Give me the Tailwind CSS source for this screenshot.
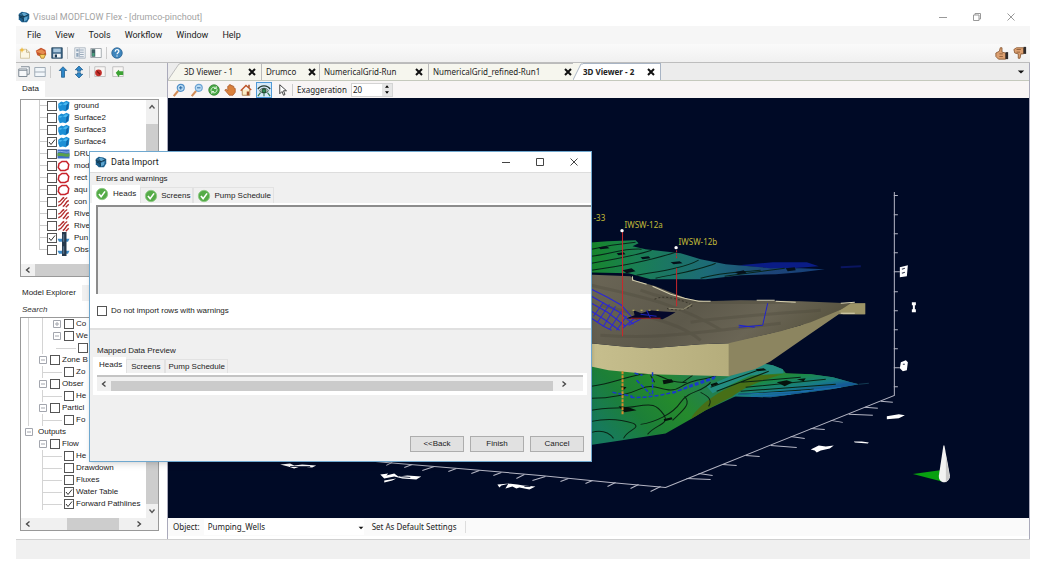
<!DOCTYPE html>
<html lang="en">
<head>
<meta charset="utf-8">
<title>Visual MODFLOW Flex - [drumco-pinchout]</title>
<script src="https://cdn.jsdelivr.net/npm/@tailwindcss/browser@4"></script>
</head>
<body class="bg-white font-['Liberation_Sans',Arial,sans-serif] text-[8px] leading-3 text-[#222]">

<!-- Icon library -->
<svg class="hidden">
  <symbol id="logo" viewBox="0 0 16 16"><path d="M1 4l4-3 6 1 4 2v6l-3 5-7 0-4-4z" fill="#1d5f8c"/><path d="M3 4l5-2 5 3-4 3zM8 9l5-2-1 5-4 2z" fill="#5fa6cf"/><path d="M2 8l5 2v4M1 6l6 2 7-3M4 3l4 5" stroke="#123448" stroke-width="1.2" fill="none"/></symbol>
  <symbol id="new" viewBox="0 0 16 16"><path d="M2 3h8l4 4v8H2z" fill="#fbf6e4" stroke="#c9b98c"/><path d="M10 3v4h4" fill="none" stroke="#b5a67c"/><path d="M4 0l1 3 3 1-3 1-1 3-1-3-3-1 3-1z" fill="#f0b93a"/></symbol>
  <symbol id="open" viewBox="0 0 16 16"><path d="M1 5l7-4 6 3 1 6-4 4-8-3z" fill="#c5532c"/><path d="M1 6l8-3 5 4-3 3z" fill="#e68c4f"/><path d="M6 10h8l-2 5H8z" fill="#f5cf62" stroke="#a8711c"/></symbol>
  <symbol id="save" viewBox="0 0 16 16"><path d="M1 1h14v14H1z" fill="#3c6485" stroke="#1e3d57"/><path d="M3 2h10v5H3z" fill="#a9c6dc"/><path d="M3 9h10v5H3z" fill="#f3f6f8"/><path d="M5 10h3v4H5z" fill="#1e3d57"/></symbol>
  <symbol id="table" viewBox="0 0 16 16"><path d="M1 1h14v14H1z" fill="#eef1f4" stroke="#a3adb8"/><path d="M3 3h3v3H3zM3 8h3v5H3z" fill="#8fa5ba"/><path d="M8 4h5M8 7h5M8 10h5M8 13h5M7 2v12" stroke="#7f93a8"/></symbol>
  <symbol id="panel" viewBox="0 0 16 16"><path d="M1 2h14v12H1z" fill="#fff" stroke="#8a9298"/><path d="M2 3h5v10H2z" fill="#3f5f63"/><path d="M3 8h3v4H3z" fill="#49a07d"/></symbol>
  <symbol id="help" viewBox="0 0 16 16"><circle cx="8" cy="8" r="7" fill="#3f86bd" stroke="#265e8d"/><path d="M5.500 6.200c0-3.400 5-3.300 5-.4 0 1.800-2.400 1.900-2.400 3.700M8 11.200v1.600" fill="none" stroke="#fff" stroke-width="1.700"/></symbol>
  <symbol id="windows" viewBox="0 0 16 16"><path d="M4 1h11v10h-3M1 4h11v10H1z" fill="#f6f8fa" stroke="#7d8993" stroke-width="1.300"/><path d="M1 6h11" stroke="#7d8993"/></symbol>
  <symbol id="split" viewBox="0 0 16 16"><path d="M1 2h14v12H1zM1 8h14" fill="#f1f6fa" stroke="#9fabb6" stroke-width="1.300"/></symbol>
  <symbol id="up" viewBox="0 0 16 16"><path d="M8 1l5 5h-3v9H6V6H3z" fill="#2c86c8" stroke="#1b5b8e"/></symbol>
  <symbol id="updown" viewBox="0 0 16 16"><path d="M8 0l5 5h-3v2H6V5H3zM8 16l5-5h-3V9H6v2H3z" fill="#2c86c8" stroke="#1b5b8e"/></symbol>
  <symbol id="rec" viewBox="0 0 16 16"><path d="M1 1h14v13H1z" fill="#f8f6f4" stroke="#b3b3b3"/><circle cx="6" cy="9" r="4.500" fill="#c22f2b"/><path d="M4 7l4 4" stroke="#7e1512" stroke-width="1.500"/></symbol>
  <symbol id="rec2" viewBox="0 0 16 16"><path d="M1 1h14v13H1z" fill="#f8f6f4" stroke="#b3b3b3"/><path d="M5 9l4-4 1 2h5v5h-5l-1 3z" fill="#3ca234"/></symbol>
  <symbol id="zoomin" viewBox="0 0 16 16"><path d="M7 9l-5 6" stroke="#d28c57" stroke-width="2.500"/><circle cx="10" cy="5.500" r="4" fill="#bcdcf4" stroke="#4f8ec6" stroke-width="1.300"/><path d="M8 5.500h4M10 3.500v4" stroke="#1d5b9a"/></symbol>
  <symbol id="zoomout" viewBox="0 0 16 16"><path d="M7 9l-5 6" stroke="#d28c57" stroke-width="2.500"/><circle cx="10" cy="5.500" r="4" fill="#bcdcf4" stroke="#6da3d2" stroke-width="1.300"/><path d="M8 5.500h4" stroke="#1d5b9a"/></symbol>
  <symbol id="rotate" viewBox="0 0 16 16"><circle cx="8" cy="8" r="7" fill="#4aa846" stroke="#2f7c2d"/><path d="M4 9c0-5 5-6 7-3M12 7c0 5-5 6-7 3M11 3v3H8M5 13v-3h3" fill="none" stroke="#dff4dd" stroke-width="1.300"/></symbol>
  <symbol id="hand" viewBox="0 0 16 16"><path d="M1 8l2-1 2 2V3l2-1V1h2v1l2 0v1h2v2l2 1v5l-3 4H7z" fill="#d9803c" stroke="#a9582a"/></symbol>
  <symbol id="home" viewBox="0 0 16 16"><path d="M3 8v7h10V7" fill="#fbeec6" stroke="#9a6a31"/><path d="M1 9l7-7 7 6" fill="none" stroke="#c0562a" stroke-width="2"/><path d="M9 10h3v5H9zM11 1h2v4h-2z" fill="#a34c25"/></symbol>
  <symbol id="eye" viewBox="0 0 16 16"><path d="M1 7c3-5 11-5 14 0" fill="none" stroke="#263c33" stroke-width="1.500"/><path d="M3 9c2-4 8-4 10 0-2 3-8 3-10 0z" fill="#e9f6ec" stroke="#263c33"/><circle cx="8" cy="9" r="2.400" fill="#2f8a55" stroke="#15301f"/><path d="M4 11l-3 4M12 11l3 4M8 12v3" stroke="#2f7a4c" stroke-width="1.300"/></symbol>
  <symbol id="cursor" viewBox="0 0 16 16"><path d="M5 1v12l3-3 2 5 2-1-2-5h4z" fill="#fff" stroke="#333" stroke-width="1.200"/></symbol>
  <symbol id="like" viewBox="0 0 16 16"><path d="M1 8l4-2 1-4h2v5l4 1v7H4l-3-3z" fill="#dca071" stroke="#8d5c36"/><path d="M12 7h3v8h-3z" fill="#2f2b2b"/><path d="M5 9h4M5 12h4" stroke="#8d5c36"/></symbol>
  <symbol id="dislike" viewBox="0 0 16 16"><path d="M1 4l3-2h8v7l-3 0-1 5H6V9L2 8z" fill="#dca071" stroke="#8d5c36"/><path d="M12 1h3v8h-3z" fill="#2f2b2b"/><path d="M4 4h5M4 7h4" stroke="#8d5c36"/></symbol>
  <symbol id="surface" viewBox="0 0 16 16"><path d="M1 5l4-3 3 1 4-2 4 2-1 9-4 3-4-1-4 1-2-5z" fill="#1b8fd6"/><path d="M2 5l5 1 4-3 4 1-4 3-4-1-4 2z" fill="#49b9f0"/><path d="M15 3l-1 9-3 2 1-7z" fill="#0f63a6"/></symbol>
  <symbol id="layers" viewBox="0 0 16 16"><path d="M0 2h16v12H0z" fill="#3f6fc4"/><path d="M0 7c5-2 10 2 16 0v4c-5 2-10-1-16 0z" fill="#5aa04b"/><path d="M0 5c5-2 10 2 16 0" stroke="#a9c8f0" fill="none"/></symbol>
  <symbol id="ring" viewBox="0 0 16 16"><path d="M6 2h6l3 4-1 6-4 2H4L1 10l1-5z" fill="#fff" stroke="#c8242c" stroke-width="2"/></symbol>
  <symbol id="lines" viewBox="0 0 16 16"><path d="M1 8c4 0 4-5 8-6M1 13c6-1 6-8 12-11M7 14c4-1 3-6 8-8M11 15l4-4" fill="none" stroke="#b32a2a" stroke-width="1.800"/></symbol>
  <symbol id="well" viewBox="0 0 16 16"><path d="M0 9h16l-2 4H2z" fill="#3c8ac6"/><path d="M6 0h6v16H6z" fill="#25384b"/><path d="M7 3h2v10H7z" fill="#56718a"/></symbol>
  <symbol id="ok" viewBox="0 0 16 16"><circle cx="8" cy="8" r="6.500" fill="#54ab47" stroke="#8fca86"/><path d="M4.500 8l2.500 3 4.500-6" fill="none" stroke="#fff" stroke-width="1.800"/></symbol>
  <symbol id="tick" viewBox="0 0 10 10"><path d="M2 5l2 2.500 4-5" fill="none" stroke="#333"/></symbol>
  <symbol id="x" viewBox="0 0 10 10"><path d="M1.500 1.500l7 7M8.500 1.500l-7 7" fill="none" stroke="currentColor"/></symbol>
  <symbol id="xb" viewBox="0 0 10 10"><path d="M2 2l6 6M8 2L2 8" fill="none" stroke="#111" stroke-width="2"/></symbol>
  <symbol id="left" viewBox="0 0 10 10"><path d="M6.500 2.500L3.500 5l3 2.500" fill="none" stroke="#444" stroke-width="1.300"/></symbol>
  <symbol id="right" viewBox="0 0 10 10"><path d="M3.500 2.500L6.500 5l-3 2.500" fill="none" stroke="#444" stroke-width="1.300"/></symbol>
  <symbol id="upc" viewBox="0 0 10 10"><path d="M2.500 6.500L5 3.500l2.500 3" fill="none" stroke="#555" stroke-width="1.300"/></symbol>
  <symbol id="downc" viewBox="0 0 10 10"><path d="M2.500 3.500L5 6.500l2.500-3" fill="none" stroke="#555" stroke-width="1.300"/></symbol>
  <symbol id="caret" viewBox="0 0 10 10"><path d="M1 3h8L5 7z" fill="#111"/></symbol>
  <symbol id="plus" viewBox="0 0 8 8"><path d="M.5.5h7v7h-7zM2 4h4M4 2v4" fill="#fff" stroke="#a3a6ae"/></symbol>
  <symbol id="minus" viewBox="0 0 8 8"><path d="M.5.5h7v7h-7zM2 4h4" fill="#fff" stroke="#a3a6ae"/></symbol>
</svg>

<div class="relative mt-2 mr-5 ml-4">
  <!-- Title bar -->
  <header class="flex h-[18px] items-center font-[Roboto,sans-serif] text-[9px] text-[#a3a3a3]">
    <svg class="ml-0.5 size-3"><use href="#logo"/></svg>
    <h1 class="ml-[3px]">Visual MODFLOW Flex - [drumco-pinchout]</h1>
    <div class="mr-3.5 ml-auto flex gap-6 text-[#999]">
      <button aria-label="Minimize"><svg class="size-2.5" viewBox="0 0 10 10"><path d="M1 5.500h8" stroke="currentColor"/></svg></button>
      <button aria-label="Restore"><svg class="size-2.5" viewBox="0 0 10 10"><path d="M1.500 3h5.500v5.500H1.500zM3 3V1.500h5.500V7H7" fill="none" stroke="currentColor"/></svg></button>
      <button aria-label="Close"><svg class="size-2.5"><use href="#x"/></svg></button>
    </div>
  </header>

  <!-- Menu bar -->
  <nav class="flex h-[18px] items-center gap-3.5 bg-[#f6f6f6] pl-[11px] font-[Roboto,sans-serif] text-[9px]">
    <button>File</button><button>View</button><button>Tools</button><button>Workflow</button><button>Window</button><button>Help</button>
  </nav>

  <!-- Main toolbar -->
  <div class="flex h-[19px] items-center gap-1 border-b border-[#bdbdbd] bg-linear-to-b from-[#fafafa] to-[#f0f0f0] pl-[3px]">
    <button aria-label="New"><svg class="size-3"><use href="#new"/></svg></button>
    <button aria-label="Open"><svg class="size-3"><use href="#open"/></svg></button>
    <button aria-label="Save"><svg class="size-3"><use href="#save"/></svg></button>
    <span class="h-3 w-px bg-[#ccc]"></span>
    <button aria-label="Table" class="ml-0.5"><svg class="size-3"><use href="#table"/></svg></button>
    <button aria-label="Panel"><svg class="size-3"><use href="#panel"/></svg></button>
    <span class="h-3 w-px bg-[#ccc]"></span>
    <button aria-label="Help"><svg class="size-3"><use href="#help"/></svg></button>
    <button aria-label="Like" class="ml-auto"><svg class="size-3.5"><use href="#like"/></svg></button>
    <button aria-label="Dislike" class="mr-[3px]"><svg class="size-3.5"><use href="#dislike"/></svg></button>
  </div>

  <main class="flex">
    <!-- Left column -->
    <aside class="flex w-[151px] shrink-0 flex-col bg-[#f0f0f0]">
      <div class="flex h-[18px] items-center gap-1 pl-0.5">
        <button aria-label="Cascade"><svg class="size-3"><use href="#windows"/></svg></button>
        <button aria-label="Split"><svg class="size-3"><use href="#split"/></svg></button>
        <span class="h-3 w-px bg-[#ccc]"></span>
        <button aria-label="Up" class="ml-0.5"><svg class="size-3"><use href="#up"/></svg></button>
        <button aria-label="Expand"><svg class="size-3"><use href="#updown"/></svg></button>
        <span class="h-3 w-px bg-[#ccc]"></span>
        <button aria-label="Stop"><svg class="size-3"><use href="#rec"/></svg></button>
        <button aria-label="Run" class="ml-0.5"><svg class="size-3"><use href="#rec2"/></svg></button>
      </div>
      <div class="flex"><button class="h-4 bg-white px-1.5">Data</button></div>
      <section class="bg-white pt-0.5 pr-2 pb-2 pl-1">
        <div class="border border-[#999]">
          <div class="flex">
            <div id="data-tree" class="min-w-0 flex-1 overflow-hidden pb-2 whitespace-nowrap"></div>
            <div class="flex w-3 flex-col items-center bg-[#f0f0f0]">
              <button aria-label="Scroll up" class="mt-0.5 mb-3"><svg class="size-2.5"><use href="#upc"/></svg></button>
              <span class="h-20 w-full bg-[#cdcdcd]"></span>
            </div>
          </div>
          <div class="flex h-3 items-center bg-[#f0f0f0]">
            <button aria-label="Scroll left" class="mx-0.5"><svg class="size-2.5"><use href="#left"/></svg></button>
            <span class="h-full w-20 bg-[#cdcdcd]"></span>
          </div>
        </div>
      </section>
      <div class="flex"><button class="h-4 bg-white px-1.5">Model Explorer</button></div>
      <section class="bg-white pr-2 pb-2 pl-1">
        <input type="search" aria-label="Search" placeholder="Search" class="block h-4 w-full px-0.5 italic placeholder:text-[#333]">
        <div class="border border-[#999]">
          <div class="flex">
            <div id="model-tree" class="min-w-0 flex-1 overflow-hidden pb-2 whitespace-nowrap"></div>
            <div class="flex w-3 flex-col items-center justify-end bg-[#f0f0f0]">
              <span class="h-20 w-full bg-[#cdcdcd]"></span>
              <button aria-label="Scroll down" class="my-0.5"><svg class="size-2.5"><use href="#downc"/></svg></button>
            </div>
          </div>
          <div class="flex h-3 items-center bg-[#f0f0f0]">
            <button aria-label="Scroll left" class="mr-[34px] ml-0.5"><svg class="size-2.5"><use href="#left"/></svg></button>
            <span class="h-full w-[52px] bg-[#cdcdcd]"></span>
            <button aria-label="Scroll right" class="mr-3.5 ml-auto"><svg class="size-2.5"><use href="#right"/></svg></button>
          </div>
        </div>
      </section>
    </aside>

    <!-- Viewer -->
    <section class="flex min-w-0 flex-1 flex-col border-x border-[#aab] font-['Noto_Sans',sans-serif]">
      <div class="flex h-[18px] items-stretch border-b border-[#c5c9bd] bg-[#ececec]" role="tablist">
        <svg class="w-3" viewBox="0 0 12 18" preserveAspectRatio="none"><path d="M0 18L11 1h1v17z" fill="#f6f6ee"/><path d="M0 18L11 1h1" fill="none" stroke="#bbb"/></svg>
        <button class="flex w-[82px] items-center justify-between border-t border-r border-[#bbb] bg-[#f6f6ee] pr-1 pl-1">3D Viewer - 1 <svg class="size-2.5"><use href="#xb"/></svg></button>
        <button class="flex w-[58px] items-center justify-between border-t border-r border-[#bbb] bg-[#f6f6ee] pr-0.5 pl-1">Drumco <svg class="size-2.5"><use href="#xb"/></svg></button>
        <button class="flex w-[109px] items-center justify-between border-t border-r border-[#bbb] bg-[#f6f6ee] pr-1 pl-1">NumericalGrid-Run <svg class="size-2.5"><use href="#xb"/></svg></button>
        <button class="flex w-[144px] items-center justify-between border-t border-[#bbb] bg-[#f6f6ee] pr-0 pl-1">NumericalGrid_refined-Run1 <svg class="size-2.5"><use href="#xb"/></svg></button>
        <svg class="w-2.5 bg-[#f6f6ee]" viewBox="0 0 10 18" preserveAspectRatio="none"><path d="M0 18L8 1h2v17z" fill="#fff"/><path d="M0 18L8 1h2" fill="none" stroke="#a8b4c4"/></svg>
        <button class="flex w-[78px] items-center justify-between border-t border-r border-[#a8b4c4] bg-white pr-1 font-bold">3D Viewer - 2 <svg class="size-2.5"><use href="#xb"/></svg></button>
        <button aria-label="Tab list" class="mr-1 ml-auto"><svg class="size-2"><use href="#caret"/></svg></button>
      </div>
      <div class="flex h-[17px] items-center gap-1 bg-[#f8f5f5] pl-1">
        <button aria-label="Zoom in"><svg class="size-3.5"><use href="#zoomin"/></svg></button>
        <button aria-label="Zoom out"><svg class="size-3.5"><use href="#zoomout"/></svg></button>
        <button aria-label="Rotate"><svg class="size-3"><use href="#rotate"/></svg></button>
        <button aria-label="Pan"><svg class="size-3"><use href="#hand"/></svg></button>
        <button aria-label="Home"><svg class="size-3"><use href="#home"/></svg></button>
        <button aria-label="View" class="border border-[#4f9ad8] bg-[#d6e9f8]"><svg class="size-3.5"><use href="#eye"/></svg></button>
        <button aria-label="Select"><svg class="size-3"><use href="#cursor"/></svg></button>
        <span class="h-3 w-px bg-[#ccc]"></span>
        <label for="exag">Exaggeration</label>
        <span class="flex h-3.5 items-stretch border border-[#d4d4d4] bg-white">
          <input id="exag" value="20" class="w-[30px] px-px">
          <span class="flex w-2.5 flex-col bg-[#e6e6e6]"><button aria-label="Increase" class="flex h-1.5 items-center justify-center"><svg class="h-[3px] w-1" viewBox="0 0 6 4"><path d="M0 4l3-4 3 4z"/></svg></button><button aria-label="Decrease" class="flex h-1.5 items-center justify-center"><svg class="h-[3px] w-1" viewBox="0 0 6 4"><path d="M0 0l3 4 3-4z"/></svg></button></span>
        </span>
      </div>

      <!-- 3D scene -->
      <svg class="block w-full bg-[#000a26]" viewBox="168 98 860 420">
        <defs>
          <linearGradient id="gU" gradientUnits="userSpaceOnUse" x1="591" y1="240" x2="830" y2="280"><stop offset="0" stop-color="#17862a"/><stop offset=".2" stop-color="#1a7f54"/><stop offset=".5" stop-color="#1d6a78"/><stop offset=".75" stop-color="#1d4478"/><stop offset="1" stop-color="#14407a"/></linearGradient>
          <linearGradient id="gL" gradientUnits="userSpaceOnUse" x1="610" y1="440" x2="690" y2="370"><stop offset="0" stop-color="#177a5c"/><stop offset=".35" stop-color="#1c7f38"/><stop offset=".7" stop-color="#258a2c"/><stop offset="1" stop-color="#23804e"/></linearGradient>
          <linearGradient id="gR" gradientUnits="userSpaceOnUse" x1="760" y1="370" x2="765" y2="398"><stop offset="0" stop-color="#3f7a1c"/><stop offset=".4" stop-color="#1b8a44"/><stop offset=".8" stop-color="#187d86"/><stop offset="1" stop-color="#155a96"/></linearGradient>
          <linearGradient id="gT" x1="0" y1="0" x2="1" y2=".3"><stop offset="0" stop-color="#6b6656"/><stop offset=".5" stop-color="#5d594b"/><stop offset=".75" stop-color="#6a6555"/><stop offset="1" stop-color="#57533f"/></linearGradient>
          <linearGradient id="gB"><stop offset="0" stop-color="#a59e70"/><stop offset=".1" stop-color="#c6be8d"/><stop offset="1" stop-color="#b5ad7c"/></linearGradient>
        </defs>
        <!-- lower water table -->
        <path d="M580 364L730 374L760 363L772 365L782 369L786 374L810 374L832 377L850 382L858 384L830 389L800 393L770 397L735 396L705 410L690 419L665 433L620 440L580 446z" fill="url(#gL)"/>
        <path d="M724 384L765 372L810 374L832 377L850 382L858 384L830 389L800 393L770 397L732 396z" fill="url(#gR)"/>
        <path d="M706 386L760 363L772 365L782 369L783 373L750 375L712 393z" fill="#238c80"/>
        <path d="M690 419C700 400 730 384 758 375L782 374C760 380 742 388 732 396L705 410z" fill="#476f17"/>
        <g fill="none" stroke="#0a2414">
          <path d="M591 386c20-3 30-8 50-12s20 9 45 8M591 398c20 0 35-3 50-10s25 8 40-2 30-5 40-14M591 410c16-4 30-1 45-4s20-2 27 8-8 10-16 20M591 421c14-3 30-2 42 2 8 5-6 6-10 15M591 432c8-2 16-2 22 6M640 424c14-2 32-10 40-22s22-10 30-20M684 396c8 8-4 16-12 24M700 392c8 4 12 8 8 14"/>
          <path d="M740 382l60-5M745 387l80-8M740 391l95-7M738 394l75-5M710 387l50-18M716 391l52-20M650 375l4 7M692 375l-10 7"/>
        </g>
        <path d="M618 406l10 1 8 3-12 2zM662 380l9-1 2 3-10 2zM663 419l8-2 1 2-8 2zM710 384l6-2 2 2-7 2zM755 369l8-1 3 2-9 1zM776 382l10-2 6 2-8 4zM620 386l6 1-3 3zM796 379l9-1-2 3z" fill="#06130d"/>
        <path d="M738 394l70-3M750 396l40-2M800 391l40-4" stroke="#1b6fae" fill="none"/>
        <path d="M858 384l10-1" stroke="#123a52"/>
        <!-- model block -->
        <path d="M580 342L620 346L650 348L700 344L729 343V376L650 374L608 370L580 364z" fill="url(#gB)"/>
        <path d="M728 342L770 333L800 325L838 308L864 303V314H838L806 336L770 361L754 369L728 376z" fill="#8c8560"/>
        <path d="M580 274L630 276L634 280L655 286L688 299L705 301L740 300L800 301L848 303L864 303L846 307L810 322L780 331L728 343L700 344L650 348L620 346L580 342z" fill="url(#gT)"/>
        <path d="M850 303h14.500v11H842l-4-3z" fill="#9c9467"/>
        <path d="M591 285c40 10 80 15 130 45M600 305c50 12 80 18 100 35M640 290c40 16 90 12 150 12M690 322c40-6 80-8 130-12M600 335c60 4 90-2 180-12" fill="none" stroke="#4a4639" stroke-opacity=".3" stroke-width="3"/>
        <path d="M632 276v4l14 4M652 286l18 8 14 4 14 3h12M756 300h18M775 301l20 1M840 303l14-1M840 313h14" fill="none" stroke="#d8d2b2"/>
        <path d="M654 299c10-5 26 0 38 6-8 6-20 5-26 3" fill="none" stroke="#37342a" stroke-dasharray="2 2"/>
        <path d="M668 308l15 1 8-5" fill="none" stroke="#8f8a70"/>
        <!-- particle tracks -->
        <path d="M591 289l16 8 14 8 12 14M591 296l14 8 14 8 14 12M591 303l16 9 18 14M591 311l14 9 14 10M591 318l12 8 8 4M593 316l10-14M597 322l12-18M603 326l12-20M609 329l12-18M616 330l10-14M622 328l12-10M628 325l12-6" fill="none" stroke="#2a25d8"/>
        <path d="M626 318l8-3-1-5 8 3 8-3 10 1 16 1-7 4-6 3-16-1-10 1z" fill="#04082a"/>
        <path d="M632 310h30" stroke="#c4bc60" stroke-dasharray="2 6"/><path d="M630 318h30" stroke="#a52222"/><path d="M640 314l16 2M646 310l4 8" stroke="#1d22b8"/>
        <path d="M767 303l-5 22M762 325l-24 2M738 325l16 2" fill="none" stroke="#1f22d0"/>
        <path d="M630 397c30 1 50-7 84-19M652 372v22M634 373l8 2M636 380l14 14M672 393l20-9 24-8M612 392l20 4" fill="none" stroke="#1a38cc" stroke-width="1.500" stroke-dasharray="4 2"/>
        <!-- upper water table -->
        <path d="M738 265l34-3h34l12 4-40 3z" fill="#0a1c86"/>
        <path d="M580 243L607 241L635 240L638 243L632 246L645 249L680 253L700 259L725 264L770 268L800 268L824 269L800 272L775 274L740 275L705 279L650 279L628 273L580 272z" fill="url(#gU)"/>
        <path d="M840 267l20-1" stroke="#0a1560" stroke-width="2"/>
        <g fill="none" stroke="#08251a"><path d="M591 249l20-4 24-3M591 256c20-2 30-8 50-7M591 263c24-4 45-8 60-13M591 270c30-4 60-10 84-18M636 275c26-4 50-8 62-15M655 278c24-5 44-8 60-15M700 278c20-6 40-6 60-8M724 276l60-8"/></g>
        <path d="M598 247l8-1 3 2-9 1zM616 253l7-1 2 2-7 1zM622 270l9-2 4 3-9 2zM640 257l8-1 2 2-8 1zM670 262l9-1 3 2-9 1zM734 272l9-2 3 3-8 1zM785 268l9-1 1 3-8 1z" fill="#051019"/>
        <!-- wells -->
        <g fill="none" stroke="#c8282c"><path d="M622 231v105M676 268v38"/><path d="M622 371v44" stroke="#d88a2c" stroke-width="2" stroke-dasharray="3 1"/><path d="M676 250v9" stroke-dasharray="2 1"/></g>
        <circle cx="621.500" cy="230.500" r="1.700" fill="#fff"/><circle cx="675.500" cy="247.500" r="1.700" fill="#fff"/>
        <g class="fill-[#c0bb38] font-['Noto_Sans',sans-serif] text-[8px]"><text x="593" y="221">-33</text><text x="624" y="228">IWSW-12a</text><text x="678" y="245">IWSW-12b</text></g>
        <!-- axes -->
        <g fill="none" stroke="#b4b6c4"><path d="M893.500 192v203L707 470L665 487L610 482L540 475L470 469L386 462L290 453"/>
          <path d="M893 195.500h4M893 214.500h4M893 233.500h4M893 252.500h4M893 271.500h6M893 291.500h4M893 310.500h4M893 329.500h4M893 348.500h4M893 367.500h6M893 386.500h4"/>
          <path d="M880 401l12 1M864 407l13 1M848 414l24 1M830 420l12 2M810 428l14 1M790 436l14 2M770 445l26 2M745 455l14 1M722 464l14 1M698 473l14 2M686 478l24 1"/>
          <path d="M392 462l-6 3M412 464l-8 3M434 466l-12 4M456 468l-8 3M479 470l-8 3M501 472l-8 3M524 474l-8 4M545 476l-13 4M568 478l-8 3M592 480l-7 3M615 482l-8 4M638 484l-8 4M660 486l-10 5"/></g>
        <!-- foreshortened axis captions -->
        <g fill="#fff"><path d="M899 267l8-2-1 11-7 1zM900 362l5-2 2 2-1 8-4 1-3-3zM886 416l12-2 6 1-6 3-12 1zM810 449l8-4 7 1 8-1-4 3-9 2-4 2-2-2zM853 441l8 0 7 1-1 1-13-1zM911 302h4v3h-1v4h1v3h-4v-3h1v-4h-1zM380 474l8-1-2 2 8-2 4 3 9-1 14 1-5 3-14-1-8-2-10 2zM384 480l12-2-4 2-8 2zM497 484l12-1-8 2-2 2zM508 483l9 1 6 1 12 1-6 3-10-2-3 1-4-2-7 2zM280 464l10-1 4 2 8-1 14 1-4 2-12-1-6 2-6-2z"/></g>
        <path d="M901 269l3-1M901 273l3-1M902 364l2 0M400 476l10 1M524 486l6 0M290 466l20 0" stroke="#333a50"/>
        <!-- orientation marker -->
        <path d="M912 473.500L941 469.500V481z" fill="#08a010"/><path d="M942.500 445h1l5.500 30c0 9-12 9-11 0z" fill="#f2f2f2"/><path d="M945 455l4 22-4 5z" fill="#c9c9c9"/>
      </svg>

      <div class="flex h-[18px] items-center bg-[#fafafa] pl-[5px]">
        <label for="object">Object:</label>
        <span class="relative ml-1 w-40">
          <select id="object" class="block h-4 w-full appearance-none bg-white px-1"><option>Pumping_Wells</option></select>
          <svg class="pointer-events-none absolute top-1.5 right-0 size-1.5"><use href="#caret"/></svg>
        </span>
        <button class="ml-2 border-r border-[#ddd] pr-2">Set As Default Settings</button>
      </div>
    </section>
  </main>

  <footer class="h-5 border-t border-[#d0d0d0] bg-[#f0f0f0]"></footer>

  <!-- Data Import dialog -->
  <div role="dialog" aria-labelledby="dlg" class="absolute top-[143px] left-[73px] w-[503px] border border-[#6fa8cf] bg-[#f0f0f0] shadow-md">
    <div class="flex h-5 items-center bg-white pl-[5px] font-[Roboto,sans-serif] text-[9px]">
      <svg class="size-3"><use href="#logo"/></svg>
      <h2 id="dlg" class="ml-1">Data Import</h2>
      <div class="mr-3 ml-auto flex gap-6 text-[#444]">
        <button aria-label="Minimize"><svg class="size-2.5" viewBox="0 0 10 10"><path d="M1 5.500h8" stroke="currentColor"/></svg></button>
        <button aria-label="Maximize"><svg class="size-2.5" viewBox="0 0 10 10"><path d="M1.500 1.500h7v7h-7z" fill="none" stroke="currentColor"/></svg></button>
        <button aria-label="Close"><svg class="size-2.5"><use href="#x"/></svg></button>
      </div>
    </div>
    <section>
      <h3 class="border-t border-[#ddd] pl-1.5">Errors and warnings</h3>
      <div class="flex items-end pl-0.5" role="tablist">
        <button class="flex h-[18px] items-center gap-1 bg-white pr-1 pl-[3px]"><svg class="size-3.5"><use href="#ok"/></svg>Heads</button>
        <button class="flex h-4 items-center gap-[3px] border border-b-0 border-[#e2e2e2] pr-0.5 pl-[3px]"><svg class="size-3.5"><use href="#ok"/></svg>Screens</button>
        <button class="flex h-4 items-center gap-[3px] border border-b-0 border-[#e2e2e2] pr-0.5 pl-[3px]"><svg class="size-3.5"><use href="#ok"/></svg>Pump Schedule</button>
      </div>
      <div class="bg-white pt-0.5 pl-1.5"><div class="h-[89px] border-t-2 border-l-2 border-[#8c8c8c] bg-[#efefef]"></div></div>
      <div class="flex h-9 items-center border-b-2 border-[#e0e0e0] bg-white pl-[7px]">
        <label class="flex items-center gap-1"><input type="checkbox" class="size-2.5 appearance-none border border-[#555] bg-white">Do not import rows with warnings</label>
      </div>
    </section>
    <section class="pt-[15px]">
      <h3 class="pl-[7px]">Mapped Data Preview</h3>
      <div class="flex items-end pl-[3px]" role="tablist">
        <button class="h-4 bg-white pr-1 pl-1.5">Heads</button>
        <button class="h-3.5 border border-b-0 border-[#e2e2e2] px-1">Screens</button>
        <button class="h-3.5 border border-b-0 border-[#e2e2e2] px-0.5">Pump Schedule</button>
      </div>
      <div class="mr-1 ml-[3px] bg-white px-1 pt-0.5 pb-1">
        <div class="flex h-4 items-center border-t-2 border-[#c4c4c4] bg-[#f0f0f0]">
          <button aria-label="Scroll left" class="mx-0.5"><svg class="size-2.5"><use href="#left"/></svg></button>
          <span class="mt-1 h-2.5 flex-1 bg-[#cbcbcb]"></span>
          <button aria-label="Scroll right" class="mr-3.5 ml-1.5"><svg class="size-2.5"><use href="#right"/></svg></button>
        </div>
      </div>
    </section>
    <div class="mt-[41px] mr-[7px] mb-[9px] flex justify-end gap-1.5">
      <button class="h-4 w-[54px] border border-[#adadad] bg-[#e1e1e1] leading-none">&lt;&lt;Back</button>
      <button class="h-4 w-[54px] border border-[#adadad] bg-[#e1e1e1] leading-none">Finish</button>
      <button class="h-4 w-[54px] border border-[#adadad] bg-[#e1e1e1] leading-none">Cancel</button>
    </div>
  </div>
</div>

<script>
  const box = (on) => `<span class="relative flex size-2.5 shrink-0"><input type="checkbox" ${on ? 'checked' : ''} class="peer size-2.5 appearance-none border border-[#555] bg-white"><svg class="pointer-events-none absolute inset-0 hidden size-2.5 peer-checked:block"><use href="#tick"/></svg></span>`;

  const layers = [
    ['surface', 'ground'], ['surface', 'Surface2'], ['surface', 'Surface3'], ['surface', 'Surface4', 1],
    ['layers', 'DRU'], ['ring', 'mod'], ['ring', 'rect'], ['ring', 'aqu'],
    ['lines', 'con'], ['lines', 'Rive'], ['lines', 'Rive'], ['well', 'Pun', 1], ['well', 'Obs']];
  document.getElementById('data-tree').innerHTML = layers.map(([icon, name, on], i) =>
    `<label class="flex h-3 items-center pl-[18px]"><span class="flex w-2 flex-col self-stretch"><i class="h-1.5 border-b border-l border-[#ccc]"></i>${i < layers.length - 1 ? '<i class="h-1.5 border-l border-[#ccc]"></i>' : ''}</span>${box(on)}<svg class="h-3 w-[13px] shrink-0"><use href="#${icon}"/></svg><span class="ml-1">${name}</span></label>`).join('');

  // level, expander, label, checkbox state (null = no checkbox)
  const nodes = [
    [2, 'plus', 'Co'], [2, 'minus', 'We'], [3, '', ''], [1, 'minus', 'Zone B'], [2, '', 'Zo'],
    [1, 'minus', 'Obser'], [2, '', 'He'], [1, 'minus', 'Particl'], [2, '', 'Fo'],
    [0, 'minus', 'Outputs', null], [1, 'minus', 'Flow', 0], [2, '', 'He'], [2, '', 'Drawdown'], [2, '', 'Fluxes'],
    [2, '', 'Water Table', 1], [2, '', 'Forward Pathlines', 1]];
  const outputs = 9;
  const guide = '<i class="ml-1.5 w-2 shrink-0 self-stretch border-l border-[#d4d4d4]"></i>';
  const gap = '<i class="w-3.5 shrink-0"></i>';
  document.getElementById('model-tree').innerHTML = nodes.map(([lvl, exp, name, on], i) => {
    let lead = '';
    for (let l = 0; l < lvl; l++) lead += l === 0 && i < outputs || l === 1 ? guide : gap;
    const link = exp
      ? `<svg class="mx-[3px] size-2 shrink-0"><use href="#${exp}"/></svg>`
      : '<i class="mr-0.5 -ml-2 h-px w-5 shrink-0 bg-[#d4d4d4]"></i>';
    return `<label class="flex h-3 items-center pl-px">${lead}${link}${on === null ? '' : box(on)}<span class="ml-0.5">${name}</span></label>`;
  }).join('');
</script>
</body>
</html>
